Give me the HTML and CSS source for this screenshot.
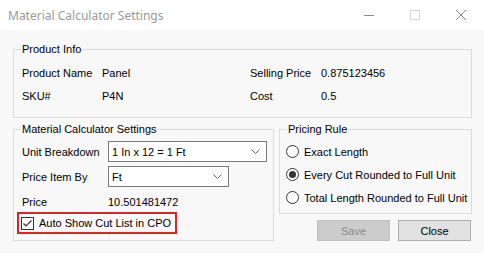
FILE: index.html
```html
<!DOCTYPE html>
<html>
    <head>
        <meta charset="utf-8">
        <title>Material Calculator Settings</title>
        <link rel="stylesheet" href="styles.css">
    </head>
    <body>

        <div class="titlebar">
            <span class="title">Material Calculator Settings</span>
            <div class="caption-btn">
                <svg width="10" height="10" viewBox="0 0 10 10"><path d="M0 5.5h10" stroke="#8a8a8a" stroke-width="1"/></svg>
            </div>
            <div class="caption-btn">
                <svg width="10" height="10" viewBox="0 0 10 10"><rect x="0.5" y="0.5" width="9" height="9" fill="none" stroke="#d6d6d6" stroke-width="1"/></svg>
            </div>
            <div class="caption-btn">
                <svg width="10" height="10" viewBox="0 0 10 10"><path d="M0 0L10 10M10 0L0 10" stroke="#8a8a8a" stroke-width="1"/></svg>
            </div>
        </div>

        <div class="content">

            <fieldset class="group info">
                <legend>Product Info</legend>
                <div class="info-grid">
                    <span>Product Name</span><span>Panel</span>
                    <span>Selling Price</span><span>0.875123456</span>
                    <span>SKU#</span><span>P4N</span>
                    <span>Cost</span><span>0.5</span>
                </div>
            </fieldset>

            <div class="lower">
                <fieldset class="group calc">
                    <legend>Material Calculator Settings</legend>
                    <div class="calc-grid">
                        <span>Unit Breakdown</span>
                        <div class="combo wide">
                            <span>1 In x 12 = 1 Ft</span>
                            <svg width="9" height="5" viewBox="0 0 9 5"><path d="M0.5 0.5L4.5 4.5L8.5 0.5" fill="none" stroke="#606060" stroke-width="1"/></svg>
                        </div>
                        <span>Price Item By</span>
                        <div class="combo narrow">
                            <span>Ft</span>
                            <svg width="9" height="5" viewBox="0 0 9 5"><path d="M0.5 0.5L4.5 4.5L8.5 0.5" fill="none" stroke="#606060" stroke-width="1"/></svg>
                        </div>
                        <span>Price</span>
                        <span>10.501481472</span>
                    </div>
                    <div class="highlight">
                        <span class="checkbox">
                            <svg width="11" height="11" viewBox="0 0 11 11"><path d="M1.5 5.5L4 8L9.5 2.5" fill="none" stroke="#333" stroke-width="1.2"/></svg>
                        </span>
                        <span>Auto Show Cut List in CPO</span>
                    </div>
                </fieldset>

                <div class="side">
                    <fieldset class="group rule">
                        <legend>Pricing Rule</legend>
                        <div class="radio-row"><span class="radio"></span>Exact Length</div>
                        <div class="radio-row"><span class="radio checked"></span>Every Cut Rounded to Full Unit</div>
                        <div class="radio-row"><span class="radio"></span>Total Length Rounded to Full Unit</div>
                    </fieldset>
                    <div class="buttons">
                        <button class="btn disabled">Save</button>
                        <button class="btn">Close</button>
                    </div>
                </div>
            </div>

        </div>

    </body>
</html>
```

FILE: styles.css
```css
* {
    margin: 0;
    padding: 0;
    box-sizing: border-box;
}

body {
    font-family: "Liberation Sans", Arial, sans-serif;
    font-size: 11px;
    color: #000000;
    background: #f8f8f8;
    width: 484px;
    height: 253px;
    overflow: hidden;
}

/* window title */
.titlebar {
    height: 30px;
    background: #ffffff;
    display: flex;
    align-items: center;
    padding-left: 8px;
}
.titlebar .title {
    flex: 1;
    font-family: "Noto Sans", "Open Sans", sans-serif;
    font-size: 12px;
    color: #999999;
}
.caption-btn {
    width: 46px;
    height: 30px;
    display: flex;
    align-items: center;
    justify-content: center;
}

.content {
    padding: 13px 12px 0 13px;
}

/* group boxes */
fieldset.group {
    border: 1px solid #dcdcdc;
    padding: 0 7px;
    min-width: 0;
}
fieldset.group legend {
    padding: 0 1px;
    line-height: 13px;
}

fieldset.info {
    height: 75px;
}
.info-grid {
    display: grid;
    grid-template-columns: 80px 148px 71px auto;
    grid-auto-rows: 23px;
    line-height: 23px;
    padding: 6px 0 0 1px;
}

.lower {
    display: flex;
    gap: 5px;
    margin-top: 5px;
}

fieldset.calc {
    width: 261px;
    height: 118px;
}
.calc-grid {
    display: grid;
    grid-template-columns: 86px auto;
    grid-auto-rows: 21px;
    row-gap: 4px;
    align-items: center;
    padding: 5px 0 0 1px;
}

.combo {
    height: 21px;
    background: #ffffff;
    border: 1px solid #7a7a7a;
    display: flex;
    align-items: center;
    justify-content: space-between;
    padding: 0 6px 0 3px;
}
.combo.wide { width: 159px; }
.combo.narrow { width: 121px; }

.highlight {
    width: 160px;
    height: 22px;
    border: 2px solid #e3212b;
    display: flex;
    align-items: center;
    gap: 5px;
    padding-left: 2px;
    margin: 0 0 0 -4px;
}
.checkbox {
    width: 13px;
    height: 13px;
    border: 1px solid #333333;
    background: #ffffff;
    display: flex;
    align-items: center;
    justify-content: center;
}

.side {
    width: 193px;
}
fieldset.rule {
    height: 91px;
    padding-top: 4px;
}
.radio-row {
    height: 23px;
    display: flex;
    align-items: center;
    gap: 5px;
    margin-left: -1px;
    white-space: nowrap;
}
.radio {
    flex: none;
    width: 13px;
    height: 13px;
    border: 1px solid #333333;
    border-radius: 50%;
    background: #ffffff;
    display: flex;
    align-items: center;
    justify-content: center;
}
.radio.checked::after {
    content: "";
    width: 7px;
    height: 7px;
    border-radius: 50%;
    background: #333333;
}

.buttons {
    display: flex;
    justify-content: flex-end;
    gap: 8px;
    margin-top: 6px;
    padding-right: 1px;
}
.btn {
    width: 73px;
    height: 21px;
    font-family: "Liberation Sans", Arial, sans-serif;
    font-size: 11px;
    color: #000000;
    background: #e1e1e1;
    border: 1px solid #adadad;
}
.btn.disabled {
    color: #8a8a8a;
    background: #cccccc;
    border-color: #bfbfbf;
}
```
